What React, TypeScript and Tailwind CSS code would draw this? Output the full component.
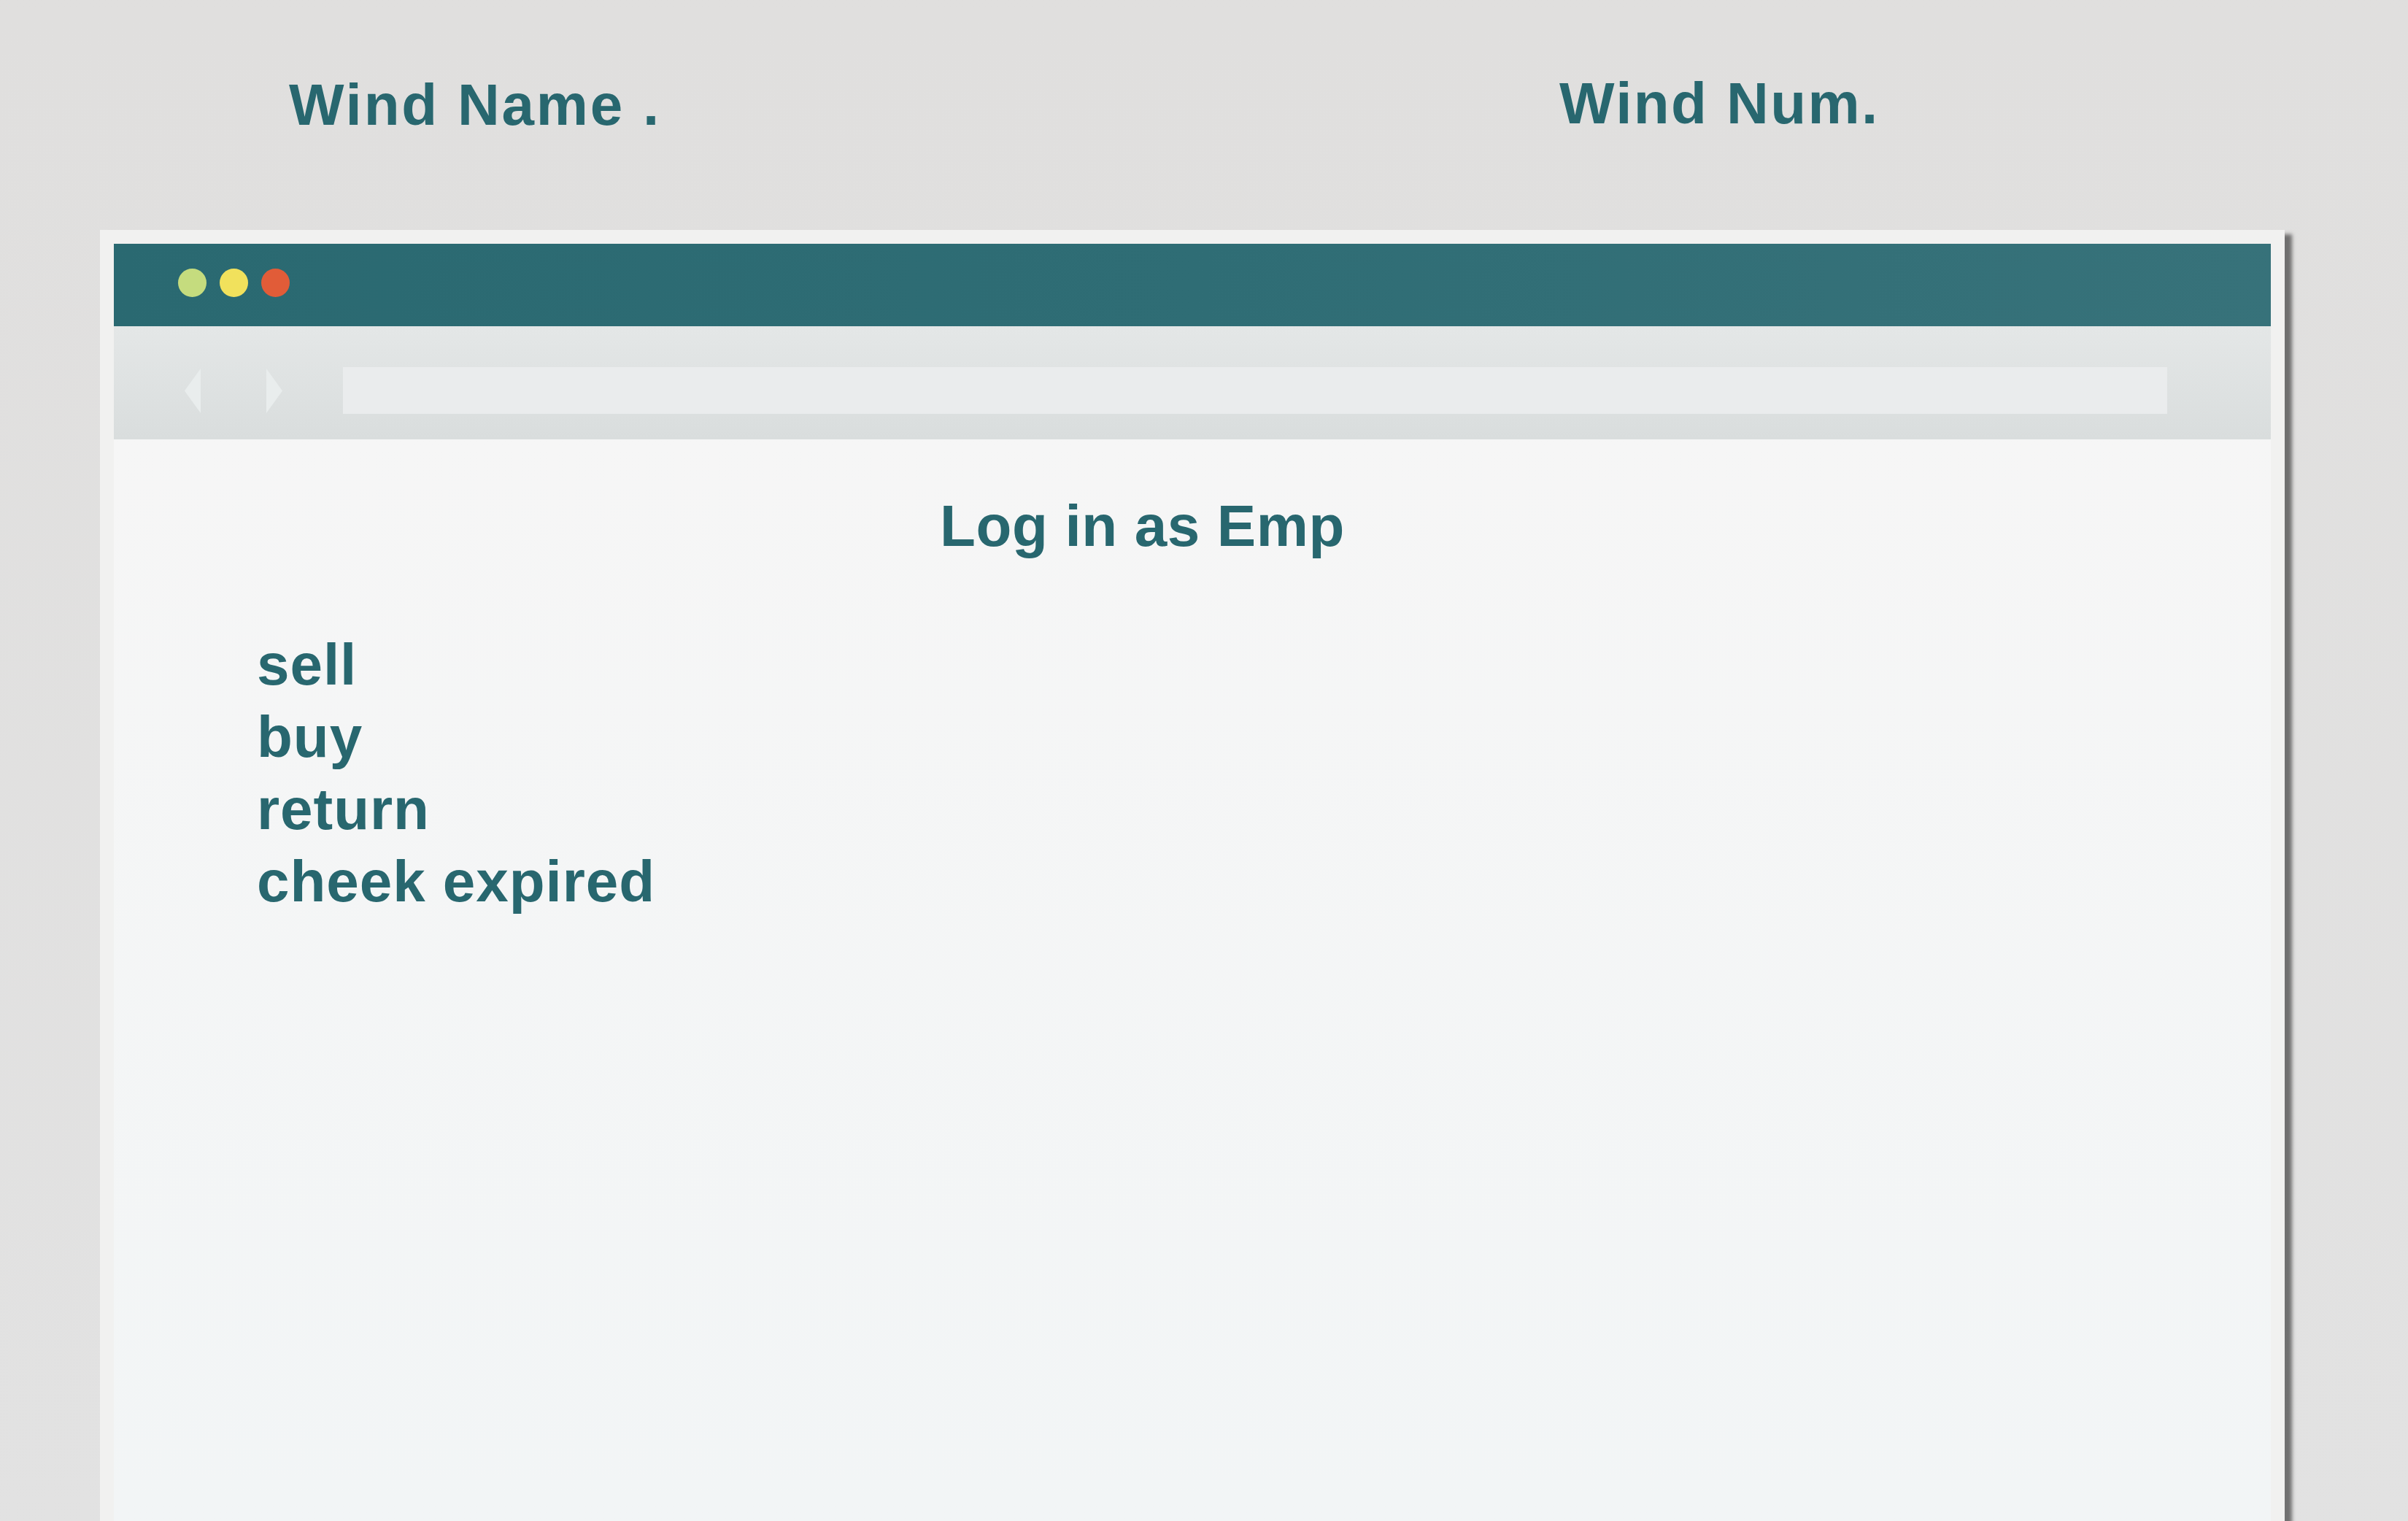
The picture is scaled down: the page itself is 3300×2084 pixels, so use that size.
import React from "react";

const menuItems: string[] = ["sell", "buy", "return", "cheek expired"];

const dots: string[] = ["bg-[#c5dc7e]", "bg-[#f1e15c]", "bg-[#e15c38]"];

const App = () => {
  return (
    <div
      className="flex flex-col h-[2084px] w-[3300px] overflow-hidden bg-gradient-to-b from-[#e0dfde] to-[#e2e2e2] text-[#28676f] font-bold"
      style={{ fontFamily: '"Liberation Sans", Arial, sans-serif' }}
    >
      {/* page header */}
      <header className="flex h-[315px] shrink-0 pl-[396px] pt-[104px]">
        <h2 className="w-[1741px] text-[80px] leading-none tracking-[0.035em]">Wind Name .</h2>
        <h2 className="text-[80px] leading-none tracking-[0.03em] -mt-[2px]">Wind Num.</h2>
      </header>

      {/* browser window */}
      <section className="flex flex-col flex-1 ml-[137px] w-[2994px] border-[19px] border-b-0 border-[#f1f1f0] bg-[#f1f1f0] shadow-[10px_6px_5px_rgba(0,0,0,0.5)]">
        <div className="flex items-center h-[113px] pl-[88px] pb-[6px] gap-[18px] bg-gradient-to-r from-[#2a6971] via-[#2f6d75] to-[#37727a]">
          {dots.map((c, i) => (
            <span key={i} className={`block w-[39px] h-[39px] rounded-full ${c}`} />
          ))}
        </div>

        <div className="flex items-start h-[155px] pt-[58px] pl-[97px] pr-[142px] bg-gradient-to-b from-[#e4e7e7] to-[#d9dddd]">
          <svg width="22" height="61" viewBox="0 0 22 61" className="shrink-0">
            <polygon points="22,0 22,61 0,30.5" fill="#e9eded" />
          </svg>
          <svg width="22" height="61" viewBox="0 0 22 61" className="ml-[90px] shrink-0">
            <polygon points="0,0 0,61 22,30.5" fill="#e9eded" />
          </svg>
          <div className="flex-1 h-[64px] ml-[83px] -mt-[2px] bg-[#eaeced]" />
        </div>

        <main className="flex-1 bg-gradient-to-b from-[#f6f6f6] to-[#f2f5f6]">
          <h1 className="pl-[1132px] pt-[79px] text-[80px] leading-none tracking-[0.008em]">Log in as Emp</h1>
          <ul className="pl-[196px] pt-[100px]">
            {menuItems.map((item) => (
              <li key={item} className="text-[80px] leading-[99px] tracking-[0.012em]">
                {item}
              </li>
            ))}
          </ul>
        </main>
      </section>
    </div>
  );
};

export default App;
